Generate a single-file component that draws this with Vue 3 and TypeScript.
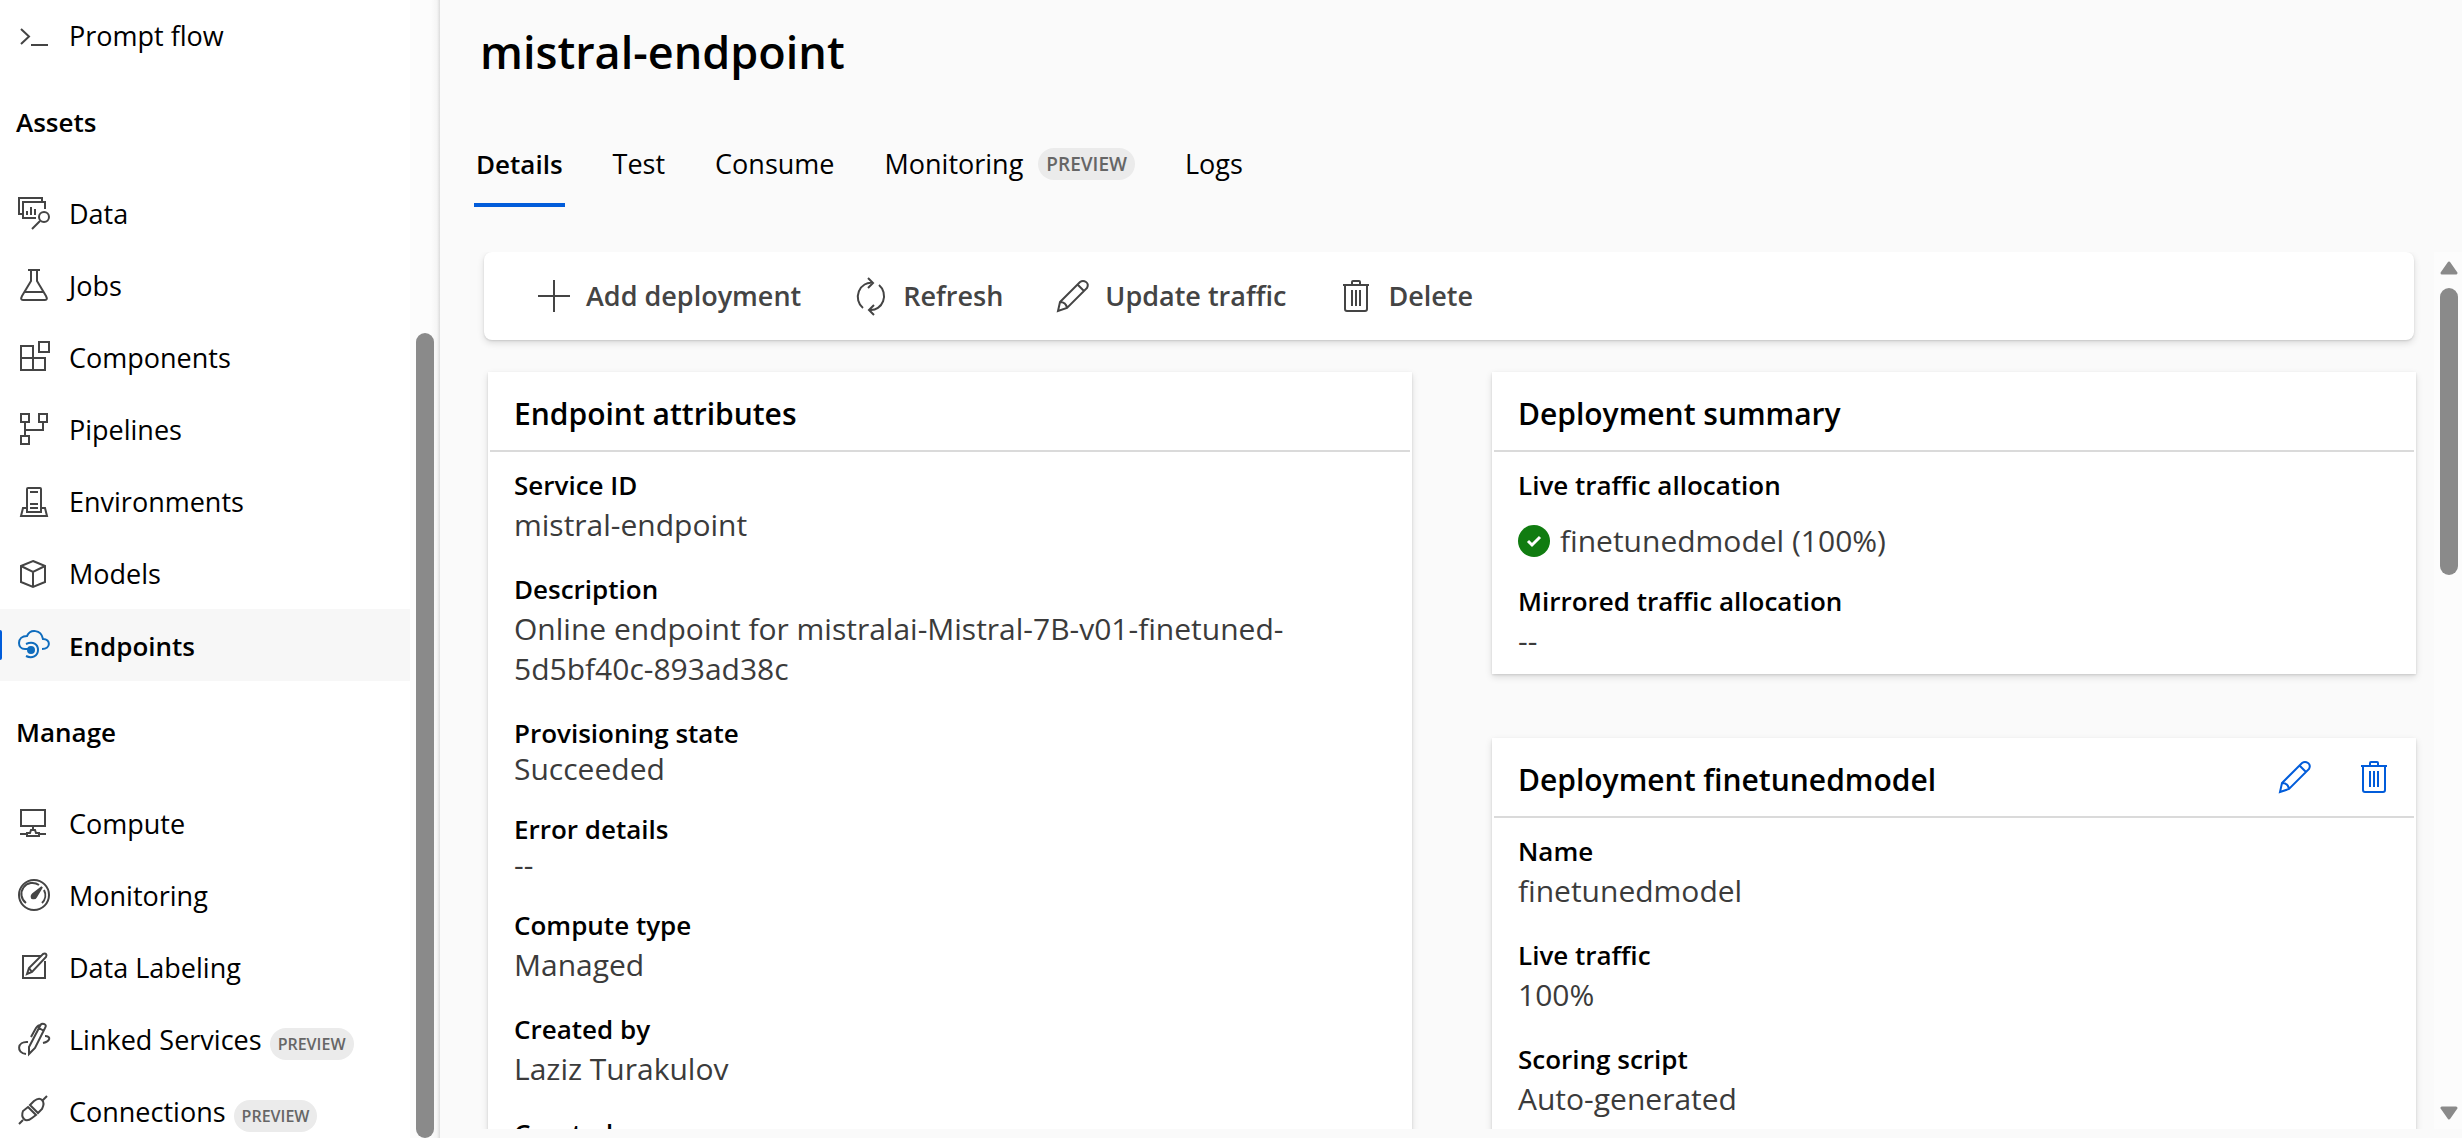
<script setup lang="ts">
interface NavItem {
  label: string
  icon: string
  preview?: boolean
  active?: boolean
}

interface Tab {
  label: string
  preview?: boolean
  active?: boolean
}

interface Attribute {
  label: string
  value: string
  compact?: boolean
}

const authoring: NavItem[] = [
  { label: 'Prompt flow', icon: '<path d="M3 10l8 7.500-8 7.500M13 26h17"/>' },
]

const assets: NavItem[] = [
  {
    label: 'Data',
    icon: '<path d="M5 17H1V1h23v3M27 12V5H5v16h13M9 18v-4M13 18v-8M17 18v-6M22 24l-8 8"/><circle cx="26" cy="20" r="5"/>',
  },
  {
    label: 'Jobs',
    icon: '<path d="M10 1h12M13 1v11L4 27q-2 4 1 4h22q3 0 1-4l-9-15V1M7 23h18"/>',
  },
  { label: 'Components', icon: '<path d="M21 1h10v10H21zM3 5h12v24H3zM3 17h24v12H15"/>' },
  {
    label: 'Pipelines',
    icon: '<path d="M3 1h8v8H3zM21 1h8v8h-8zM3 23h8v8H3zM7 9v14M7 17h18V9"/>',
  },
  {
    label: 'Environments',
    icon: '<path d="M9 27V4q0-1 1-1h12q1 0 1 1v23zM12 7h8M12 19h8M12 23h8M9 23H5L3 31h26l-2-8h-4"/>',
  },
  { label: 'Models', icon: '<path d="M15 4l12 5v16l-12 5-12-5V9zM3 9l12 6 12-6M15 15v15"/>' },
  {
    label: 'Endpoints',
    active: true,
    icon: '<path d="M7 20C3 20 1 17 1 14c0-4 3-7 8-7C12 0 23 0 25 10c8 0 8 10-1 10M8 15c7-3 12 0 12 6 0 6-6 9-12 6M7 20h6"/><circle cx="13" cy="21" r="3" fill="currentColor"/>',
  },
]

const manage: NavItem[] = [
  {
    label: 'Compute',
    icon: '<path d="M3 3h24v16H3zM15 19v4M2 27h7M21 27h7M9 29v-3h3l1-3h4l1 3h3v3z"/>',
  },
  {
    label: 'Monitoring',
    icon: '<circle cx="16" cy="16" r="15"/><path d="M8 24A11 11 0 0 1 21 6M26 11a11 11 0 0 1-2 13"/><path d="M24 8l-9 7q-2 2-1 4 3 1 4-1z" fill="currentColor"/>',
  },
  {
    label: 'Data Labeling',
    icon: '<path d="M23 5H5v22h22V10M9 23l2-6L25 3q2-1 3 0t0 3L14 21zM11 17l3 4"/>',
  },
  {
    label: 'Linked Services',
    preview: true,
    icon: '<path d="M10 19C-1 18-2 30 8 31M27 13c6 0 6 5-2 7M11 31v-7L22 3q1-3 4-2t1 4L17 25zM21 5l5 3M13 14l5-9q2-3 5-3"/>',
  },
  {
    label: 'Connections',
    preview: true,
    icon: '<path d="M29 1l-4 4M5 25l-4 4M12 10l4-4q5-4 8-1t0 9l-4 4zM10 12l8 8-4 3q-5 4-8 1t-1-8z"/>',
  },
]

const groups = [
  { title: '', items: authoring },
  { title: 'Assets', items: assets },
  { title: 'Manage', items: manage },
]

const pencil =
  '<path d="M1 31l2-9L23 2q3-2 6 0t1 6L10 28zM3 22q6 0 7 6M21 5l6 6"/>'
const trash =
  '<path d="M3 5h26M12 5V2q0-1 1-1h6q1 0 1 1v3M5 5v24q0 2 2 2h18q2 0 2-2V5M12 10v16M16 10v16M20 10v16"/>'

const commands = [
  { label: 'Add deployment', icon: '<path d="M16 0v32M0 16h32"/>' },
  {
    label: 'Refresh',
    icon: '<path d="M8 28A13 14 0 0 1 18 3M24 5a13 14 0 0 1-9 25M13-2l5 5-5 5M19 35l-5-5 5-5"/>',
  },
  { label: 'Update traffic', icon: pencil },
  { label: 'Delete', icon: trash },
]

const tabs: Tab[] = [
  { label: 'Details', active: true },
  { label: 'Test' },
  { label: 'Consume' },
  { label: 'Monitoring', preview: true },
  { label: 'Logs' },
]

const endpointAttributes: Attribute[] = [
  { label: 'Service ID', value: 'mistral-endpoint' },
  {
    label: 'Description',
    value: 'Online endpoint for mistralai-Mistral-7B-v01-finetuned-5d5bf40c-893ad38c',
  },
  { label: 'Provisioning state', value: 'Succeeded', compact: true },
  { label: 'Error details', value: '--', compact: true },
  { label: 'Compute type', value: 'Managed' },
  { label: 'Created by', value: 'Laziz Turakulov' },
  { label: 'Created on', value: '' },
]

const deploymentAttributes: Attribute[] = [
  { label: 'Name', value: 'finetunedmodel' },
  { label: 'Live traffic', value: '100%' },
  { label: 'Scoring script', value: 'Auto-generated' },
]
</script>

<template>
  <div class="shell">
    <aside class="sidebar">
      <nav class="nav">
        <section v-for="group in groups" :key="group.title">
          <h2 v-if="group.title" class="group-title">{{ group.title }}</h2>
          <a
            v-for="item in group.items"
            :key="item.label"
            href="#"
            class="nav-item"
            :class="{ active: item.active }"
          >
            <svg class="icon" viewBox="0 0 32 32" aria-hidden="true" v-html="item.icon"></svg>
            <span class="nav-text">
              <span>{{ item.label }}</span>
              <span v-if="item.preview" class="badge small">PREVIEW</span>
            </span>
          </a>
        </section>
      </nav>
      <div class="nav-track"><div class="nav-thumb"></div></div>
    </aside>

    <main class="main">
      <h1 class="title">mistral-endpoint</h1>
      <div class="tabs" role="tablist">
        <button
          v-for="tab in tabs"
          :key="tab.label"
          type="button"
          role="tab"
          class="tab"
          :class="{ active: tab.active }"
          :aria-selected="!!tab.active"
        >
          {{ tab.label }}
          <span v-if="tab.preview" class="badge">PREVIEW</span>
        </button>
      </div>

      <div class="viewport">
        <div class="content">
          <div class="toolbar" role="toolbar">
            <button v-for="cmd in commands" :key="cmd.label" type="button" class="command">
              <svg class="icon" viewBox="0 0 32 32" aria-hidden="true" v-html="cmd.icon"></svg>
              {{ cmd.label }}
            </button>
          </div>

          <div class="columns">
            <section class="card">
              <header class="card-head"><h2>Endpoint attributes</h2></header>
              <dl class="attributes">
                <div
                  v-for="attr in endpointAttributes"
                  :key="attr.label"
                  class="attribute"
                  :class="{ compact: attr.compact }"
                >
                  <dt>{{ attr.label }}</dt>
                  <dd>{{ attr.value }}</dd>
                </div>
              </dl>
            </section>

            <div class="stack">
              <section class="card">
                <header class="card-head"><h2>Deployment summary</h2></header>
                <dl class="attributes">
                  <div class="attribute allocation">
                    <dt>Live traffic allocation</dt>
                    <dd>
                      <svg class="status" viewBox="0 0 32 32" aria-hidden="true">
                        <circle cx="16" cy="16" r="16" fill="#107c10" />
                        <path d="M10 16l4 4 8-8" fill="none" stroke="#fff" stroke-width="3" />
                      </svg>
                      finetunedmodel (100%)
                    </dd>
                  </div>
                  <div class="attribute">
                    <dt>Mirrored traffic allocation</dt>
                    <dd>--</dd>
                  </div>
                </dl>
              </section>

              <section class="card">
                <header class="card-head">
                  <h2>Deployment finetunedmodel</h2>
                  <div class="card-actions">
                    <button type="button" aria-label="Edit deployment">
                      <svg class="icon" viewBox="0 0 32 32" aria-hidden="true" v-html="pencil"></svg>
                    </button>
                    <button type="button" aria-label="Delete deployment">
                      <svg class="icon" viewBox="0 0 32 32" aria-hidden="true" v-html="trash"></svg>
                    </button>
                  </div>
                </header>
                <dl class="attributes">
                  <div v-for="attr in deploymentAttributes" :key="attr.label" class="attribute">
                    <dt>{{ attr.label }}</dt>
                    <dd>{{ attr.value }}</dd>
                  </div>
                </dl>
              </section>
            </div>
          </div>
        </div>

        <div class="track">
          <svg class="arrow" viewBox="0 0 18 14" aria-hidden="true">
            <path d="M9 2l7 10H2z" />
          </svg>
          <div class="rail"><div class="thumb"></div></div>
          <svg class="arrow" viewBox="0 0 18 14" aria-hidden="true">
            <path d="M9 12L2 2h14z" />
          </svg>
        </div>
      </div>
    </main>
  </div>
</template>

<style>
body {
  margin: 0;
  background: #fafafa;
}
</style>

<style scoped>
.shell {
  display: flex;
  height: 100vh;
  overflow: hidden;
  background: #fafafa;
  color: #000;
  font-family: 'Open Sans', 'Noto Sans', sans-serif;
  font-size: 27px;
  line-height: 40px;
}

h1,
h2,
dl,
dd {
  margin: 0;
}

button {
  padding: 0;
  border: 0;
  background: none;
  color: inherit;
  font: inherit;
  cursor: pointer;
}

.icon {
  flex: none;
  width: 32px;
  height: 32px;
  overflow: visible;
  fill: none;
  stroke: currentColor;
  stroke-width: 2;
  color: #444;
}

.sidebar {
  display: flex;
  flex: none;
  width: 440px;
  overflow: hidden;
  background: #fff;
}

.nav {
  flex: 1;
  margin-top: -1px;
}

.group-title {
  box-sizing: border-box;
  height: 106px;
  padding: 29px 0 0 16px;
  font-size: 26px;
  line-height: 44px;
  font-weight: 600;
}

.nav-item {
  position: relative;
  display: flex;
  align-items: center;
  gap: 19px;
  height: 72px;
  padding-left: 18px;
  color: #000;
  text-decoration: none;
  white-space: nowrap;
}

.nav-item.active {
  background: #f7f7f7;
  font-size: 26px;
  font-weight: 600;
}

.nav-item.active .icon {
  color: #0f6cbd;
}

.nav-item.active::before {
  content: '';
  position: absolute;
  top: 21px;
  left: 0;
  width: 2px;
  height: 30px;
  border-radius: 0 2px 2px 0;
  background: #015cda;
}

.nav-text {
  display: flex;
  align-items: baseline;
  gap: 8px;
  padding-top: 2px;
}

.badge {
  padding: 0 8px;
  border-radius: 16px;
  background: #ebebeb;
  color: #666;
  font-size: 19px;
  line-height: 32px;
  font-weight: 600;
}

.badge.small {
  font-size: 16px;
}

.nav-track {
  display: flex;
  flex: none;
  align-items: flex-end;
  justify-content: center;
  width: 30px;
  background: linear-gradient(90deg, #fcfcfc 70%, #f5f5f5 90%, #dcdcdc);
}

.nav-thumb {
  width: 18px;
  height: calc(100% - 333px);
  border-radius: 9px;
  background: #8a8a8a;
}

.main {
  display: flex;
  flex: 1;
  flex-direction: column;
  min-width: 0;
  padding-bottom: 9px;
}

.title {
  flex: none;
  padding: 20px 0 0 40px;
  font-size: 45px;
  line-height: 64px;
  font-weight: 600;
}

.tabs {
  display: flex;
  flex: none;
  gap: 46px;
  margin: 37px 0 45px 34px;
}

.tab {
  display: flex;
  align-items: center;
  gap: 15px;
  box-sizing: border-box;
  height: 86px;
  padding: 3px 2px 0;
  border-bottom: 4px solid transparent;
}

.tab.active {
  border-bottom-color: #015cda;
  font-size: 26px;
  font-weight: 600;
}

.viewport {
  display: flex;
  flex: 1;
  min-height: 0;
  overflow: hidden;
}

.content {
  flex: 1;
  min-width: 0;
  padding: 0 18px 0 44px;
}

.toolbar {
  display: flex;
  align-items: center;
  gap: 54px;
  height: 88px;
  margin-right: 2px;
  padding-left: 54px;
  border-radius: 8px;
  background: #fff;
  box-shadow: 0 3px 7px rgba(0, 0, 0, 0.13), 0 1px 2px rgba(0, 0, 0, 0.11);
}

.command {
  display: flex;
  align-items: center;
  gap: 16px;
  color: #444;
  font-weight: 600;
}

.columns {
  display: grid;
  grid-template-columns: 1fr 1fr;
  gap: 80px;
  margin: 32px 0 0 4px;
}

.stack {
  display: flex;
  flex-direction: column;
  gap: 64px;
}

.card {
  background: #fff;
  box-shadow: 0 3px 7px rgba(0, 0, 0, 0.13), 0 1px 2px rgba(0, 0, 0, 0.11);
}

.card-head {
  display: flex;
  align-items: center;
  justify-content: space-between;
  height: 78px;
  margin: 0 2px;
  padding: 0 24px;
  border-bottom: 2px solid #dadada;
}

.card-head h2 {
  padding-top: 5px;
  font-size: 30px;
  font-weight: 600;
}

.card-actions {
  display: flex;
  gap: 47px;
}

.card-actions button {
  display: flex;
}

.card-actions .icon {
  color: #015cda;
}

.attributes {
  display: flex;
  flex-direction: column;
  gap: 24px;
  padding: 13px 26px;
}

.attribute dt {
  font-size: 26px;
  font-weight: 600;
}

.attribute dd {
  color: #3b3b3b;
  font-size: 30px;
}

.attribute.compact dd {
  line-height: 32px;
}

.allocation {
  margin-bottom: -4px;
}

.allocation dd {
  display: flex;
  align-items: center;
  gap: 10px;
  margin-top: 16px;
}

.status {
  width: 32px;
  height: 32px;
}

.track {
  display: flex;
  flex: none;
  flex-direction: column;
  align-items: center;
  box-sizing: border-box;
  width: 28px;
  padding: 9px 4px 9px 6px;
  background: #fcfcfc;
}

.arrow {
  flex: none;
  width: 18px;
  height: 14px;
  fill: #8a8a8a;
  stroke: #8a8a8a;
  stroke-width: 3;
  stroke-linejoin: round;
}

.rail {
  flex: 1;
  width: 18px;
  padding: 13px 0;
}

.thumb {
  height: 287px;
  border-radius: 9px;
  background: #8a8a8a;
}
</style>
